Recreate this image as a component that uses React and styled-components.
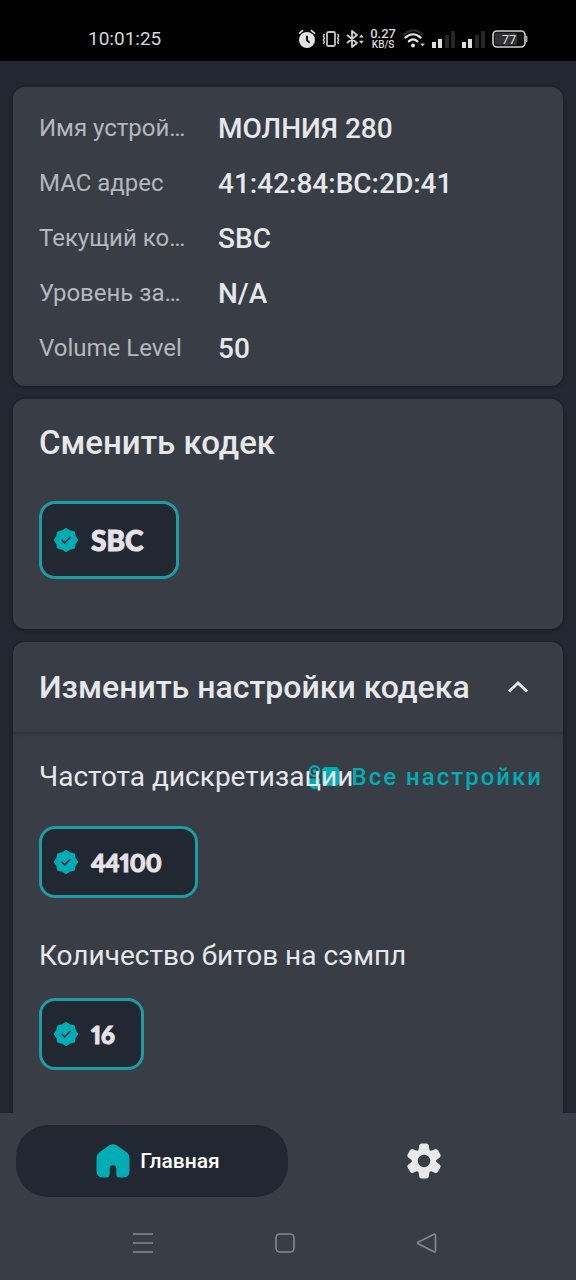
import React from "react";
import styled, { createGlobalStyle } from "styled-components";

const color = {
  bg: "#222831",
  card: "#393e46",
  teal: "#00adb5",
  text: "#e6e8ec",
  muted: "#b4b7bd",
  system: "#85898f",
};

const Global = createGlobalStyle`
  * { box-sizing: border-box; }
  body { margin: 0; background: ${color.bg}; font-family: Roboto, "Noto Sans", sans-serif; color: ${color.text}; }
  button { font: inherit; color: inherit; border: 0; background: none; padding: 0; cursor: pointer; }
  h2, h3, dl, dd, p { margin: 0; }
  svg { display: block; flex: none; }
`;

const Page = styled.div`
  min-height: 100vh;
  display: flex;
  flex-direction: column;
`;

const StatusBar = styled.header`
  display: flex;
  align-items: center;
  justify-content: space-between;
  height: 61px;
  padding: 16px 48px 0 88px;
  background: #000;
  color: #d6d6d6;
`;

const Clock = styled.time`
  font-size: 19px;
  line-height: 24px;
`;

const StatusIcons = styled.div`
  display: flex;
  align-items: center;
  gap: 6px;
`;

const Speed = styled.div`
  display: flex;
  flex-direction: column;
  align-items: center;
  font-weight: 500;
`;

const SpeedValue = styled.span`
  font-size: 13px;
  line-height: 13px;
`;

const SpeedUnit = styled.span`
  font-size: 10px;
  line-height: 10px;
`;

const Main = styled.main`
  flex: 1;
  display: flex;
  flex-direction: column;
  gap: 13px;
  padding: 26px 13px 0;
`;

const Card = styled.section`
  background: ${color.card};
  border-radius: ${(p) => (p.$open ? "12px 12px 0 0" : "12px")};
  box-shadow: 0 1px 4px rgba(0, 0, 0, 0.35);
  flex: ${(p) => (p.$open ? "1" : "none")};
`;

const InfoList = styled.dl`
  display: flex;
  flex-direction: column;
  gap: 15px;
  padding: 22px 26px 17px;
`;

const InfoRow = styled.div`
  display: grid;
  grid-template-columns: 152px 1fr;
  column-gap: 27px;
  line-height: 40px;
`;

const InfoLabel = styled.dt`
  font-size: 24px;
  color: ${color.muted};
  white-space: nowrap;
  line-height: 38px;
`;

const InfoValue = styled.dd`
  font-size: 28px;
  font-weight: 500;
`;

const CodecBody = styled.div`
  display: flex;
  flex-direction: column;
  align-items: flex-start;
  gap: 38px;
  padding: 24px 26px 50px;
`;

const Heading = styled.h2`
  font-size: ${(p) => (p.$large ? 33 : 32)}px;
  line-height: 40px;
  font-weight: 500;
  white-space: nowrap;
`;

const PanelToggle = styled.button`
  display: flex;
  width: 100%;
  align-items: center;
  justify-content: space-between;
  height: 90px;
  padding: 0 34px 0 26px;
  text-align: left;
`;

const PanelBody = styled.div`
  display: flex;
  flex-direction: column;
  gap: 41px;
  padding: 28px 20px 43px 26px;
  box-shadow: inset 0 3px 4px -1px rgba(0, 0, 0, 0.18);
`;

const Setting = styled.div`
  display: flex;
  flex-direction: column;
  align-items: flex-start;
  gap: ${(p) => p.$gap}px;
`;

const SettingHead = styled.div`
  display: grid;
  align-items: center;
  width: 100%;
`;

const SettingTitle = styled.h3`
  grid-area: 1 / 1;
  justify-self: start;
  z-index: 1;
  font-size: 28px;
  line-height: 34px;
  font-weight: 400;
  white-space: nowrap;
`;

const AllSettings = styled.button`
  grid-area: 1 / 1;
  justify-self: end;
  display: flex;
  align-items: center;
  gap: 12px;
  font-size: 24px;
  line-height: 34px;
  font-weight: 500;
  letter-spacing: 2px;
  white-space: nowrap;
  && { color: ${color.teal}; font-size: 24px; }
`;

const Chip = styled.button`
  && {
    display: inline-flex;
    align-items: center;
    gap: 13px;
    height: ${(p) => (p.$large ? 78 : 72)}px;
    padding: 0 ${(p) => (p.$narrow ? 26 : 33)}px 0 12px;
    border: 3px solid #1c9da5;
    border-radius: 16px;
    background: ${color.bg};
    color: #e6e2ea;
    font-family: Lato, "Open Sans", sans-serif;
    font-size: ${(p) => (p.$large ? 28 : 24)}px;
    font-weight: 900;
    font-variant-numeric: proportional-nums;
    -webkit-text-stroke: 1px currentColor;
  }
`;

const BottomNav = styled.nav`
  display: grid;
  grid-template-columns: 1fr 1fr;
  height: 96px;
  padding: 12px 16px;
  background: ${color.card};
`;

const NavItem = styled.button`
  && {
    display: flex;
    align-items: center;
    justify-content: center;
    gap: 10px;
    padding-left: ${(p) => (p.$active ? 12 : 0)}px;
    border-radius: 32px;
    background: ${(p) => (p.$active ? color.bg : "transparent")};
    color: ${(p) => (p.$active ? "#fff" : "#e8e9ea")};
    font-size: 21px;
    font-weight: 500;
  }
`;

const SystemNav = styled.nav`
  display: flex;
  justify-content: center;
  align-items: center;
  gap: 120px;
  height: 71px;
  padding: 0 6px 3px 0;
  background: ${color.card};
`;

const SystemButton = styled.button`
  width: 22px;
  height: 22px;
`;

function sealPath(cx, cy, outer, inner, points) {
  const pts = [];
  for (let i = 0; i < points * 2; i++) {
    const r = i % 2 ? inner : outer;
    const a = (Math.PI * i) / points - Math.PI / 2;
    pts.push((cx + r * Math.cos(a)).toFixed(2) + " " + (cy + r * Math.sin(a)).toFixed(2));
  }
  return "M" + pts.join("L") + "Z";
}

const Seal = () => (
  <svg width="24" height="24" viewBox="0 0 24 24">
    <path d={sealPath(12, 12, 10.8, 9.2, 8)} fill={color.teal} stroke={color.teal} strokeWidth="2.400" strokeLinejoin="round" />
    <path d="M8 12.300l2.600 2.600 5.400-5.400" fill="none" stroke={color.bg} strokeWidth="1.600" strokeLinecap="round" strokeLinejoin="round" />
  </svg>
);

const AlarmIcon = () => (
  <svg width="18" height="20" viewBox="0 0 18 20" fill="none" stroke="#e2e2e2" strokeLinecap="round">
    <circle cx="9" cy="11" r="8" fill="#e2e2e2" stroke="none" />
    <path d="M1.500 4.200L4.600 1.600M16.500 4.200L13.400 1.600" strokeWidth="1.600" />
    <path d="M9 7.400V11.400L11 13.200" stroke="#000" strokeWidth="1.800" />
  </svg>
);

const VibrateIcon = () => (
  <svg width="18" height="16" viewBox="0 0 18 16" fill="none" stroke="#c4c4c4" strokeWidth="1.800">
    <rect x="5" y="1" width="8" height="14" rx="1.500" />
    <path d="M2.400 3l-1 2 1 2-1 2 1 2-1 2M15.600 3l1 2-1 2 1 2-1 2 1 2" strokeWidth="1.600" />
  </svg>
);

const BluetoothIcon = () => (
  <svg width="18" height="18" viewBox="0 0 18 18" fill="none" stroke="#d2d2d2" strokeWidth="1.800" strokeLinejoin="round">
    <path d="M1 5l10 8-5 4V1l5 4-10 8" />
    <path d="M13 7.400l2.400-3 2.400 3zM13 10.800l2.400 3 2.400-3z" fill="#d2d2d2" stroke="none" />
  </svg>
);

const WifiIcon = () => (
  <svg width="24" height="19" viewBox="0 0 24 19" fill="none" strokeLinecap="round">
    <path d="M2 5.600C7.600 0 15.400 0 20.400 5.600" stroke="#2b2b2b" strokeWidth="2.400" />
    <path d="M3.400 8.600c4.800-4.400 10.600-4.400 15.200 0M6.800 12.400c2.800-2.600 5.800-2.600 8.600 0" stroke="#e4e4e4" strokeWidth="2.200" />
    <circle cx="11" cy="16.400" r="2" fill="#e4e4e4" />
    <path d="M18 14.400h5l-2.500 3z" fill="#bbb" />
  </svg>
);

const SignalIcon = () => (
  <svg width="24" height="18" viewBox="0 0 24 18">
    <path d="M0 12h4v6H0zM6 9h4v9H6z" fill="#dedede" />
    <path d="M13 5h4v13h-4zM19 1h4v17h-4z" fill="#262626" />
  </svg>
);

const BatteryIcon = () => (
  <svg width="36" height="18" viewBox="0 0 36 18">
    <rect x="1" y="1" width="32" height="16" rx="4" fill="#111" stroke="#cfcfcf" strokeWidth="1.600" />
    <rect x="3" y="3" width="22" height="12" rx="2" fill="#333" />
    <path d="M34.600 6v6" stroke="#aaa" strokeWidth="1.600" />
    <text x="17" y="14" textAnchor="middle" fontSize="13" fill="#dcdcdc" fontFamily="Roboto, sans-serif">77</text>
  </svg>
);

const ChevronUp = () => (
  <svg width="22" height="14" viewBox="0 0 22 14" fill="none" stroke={color.text} strokeWidth="3">
    <path d="M2 11.500l9-8.500 9 8.500" />
  </svg>
);

const AllSettingsIcon = () => (
  <svg width="32" height="24" viewBox="0 0 32 24">
    <circle cx="6.500" cy="6" r="4.800" fill="none" stroke={color.teal} strokeWidth="2.200" />
    <circle cx="6.500" cy="6" r="2" fill={color.teal} />
    <path d="M1 13.500h11v5a5.500 5.500 0 0 1-11 0z" fill={color.teal} />
    <rect x="14" y="2" width="17" height="19" rx="4" fill={color.teal} />
  </svg>
);

const HomeIcon = () => (
  <svg width="34" height="34" viewBox="0 0 34 34">
    <path
      fill={color.teal}
      d="M13 1.600Q17-1 21 1.600L30.600 8.200Q33.500 10.500 33.500 14V27Q33.500 33.500 27 33.500H24Q20.300 33.500 20.300 30V24.500Q20.300 21.200 17 21.200T13.700 24.500V30Q13.700 33.500 10 33.500H7Q.5 33.500 .5 27V14Q.5 10.500 3.400 8.200Z"
    />
  </svg>
);

const GearIcon = () => (
  <svg width="36" height="36" viewBox="-18 -18 36 36">
    <g fill="#e8e9ea">
      <circle r="12" />
      {[0, 60, 120, 180, 240, 300].map((a) => (
        <path key={a} transform={`rotate(${a})`} d="M-6.500-9.500Q-5-11-5-14Q-5-17.500-2-17.500H2Q5-17.500 5-14Q5-11 6.500-9.500Z" />
      ))}
    </g>
    <circle r="6.200" fill={color.card} />
  </svg>
);

const info = [
  ["Имя устрой…", "МОЛНИЯ 280"],
  ["MAC адрес", "41:42:84:BC:2D:41"],
  ["Текущий ко…", "SBC"],
  ["Уровень за…", "N/A"],
  ["Volume Level", "50"],
];

export default function App() {
  return (
    <Page>
      <Global />
      <StatusBar>
        <Clock>10:01:25</Clock>
        <StatusIcons>
          <AlarmIcon />
          <VibrateIcon />
          <BluetoothIcon />
          <Speed>
            <SpeedValue>0.27</SpeedValue>
            <SpeedUnit>KB/S</SpeedUnit>
          </Speed>
          <WifiIcon />
          <SignalIcon />
          <SignalIcon />
          <BatteryIcon />
        </StatusIcons>
      </StatusBar>
      <Main>
        <Card>
          <InfoList>
            {info.map(([label, value]) => (
              <InfoRow key={label}>
                <InfoLabel>{label}</InfoLabel>
                <InfoValue>{value}</InfoValue>
              </InfoRow>
            ))}
          </InfoList>
        </Card>
        <Card>
          <CodecBody>
            <Heading $large>Сменить кодек</Heading>
            <Chip $large type="button"><Seal />SBC</Chip>
          </CodecBody>
        </Card>
        <Card $open>
          <PanelToggle type="button" aria-expanded="true">
            <Heading as="span">Изменить настройки кодека</Heading>
            <ChevronUp />
          </PanelToggle>
          <PanelBody>
            <Setting $gap={32}>
              <SettingHead>
                <SettingTitle>Частота дискретизации</SettingTitle>
                <AllSettings type="button"><AllSettingsIcon />Все настройки</AllSettings>
              </SettingHead>
              <Chip type="button"><Seal />44100</Chip>
            </Setting>
            <Setting $gap={25}>
              <SettingTitle>Количество битов на сэмпл</SettingTitle>
              <Chip $narrow type="button"><Seal />16</Chip>
            </Setting>
          </PanelBody>
        </Card>
      </Main>
      <BottomNav>
        <NavItem $active type="button"><HomeIcon />Главная</NavItem>
        <NavItem type="button" aria-label="Настройки"><GearIcon /></NavItem>
      </BottomNav>
      <SystemNav>
        <SystemButton type="button" aria-label="Меню">
          <svg width="22" height="22" viewBox="0 0 22 22" stroke={color.system} strokeWidth="1.600">
            <path d="M1 2h20M1 11h20M1 20h20" />
          </svg>
        </SystemButton>
        <SystemButton type="button" aria-label="Домой">
          <svg width="22" height="22" viewBox="0 0 22 22" fill="none" stroke={color.system} strokeWidth="1.600">
            <rect x="2" y="2" width="18" height="18" rx="4" />
          </svg>
        </SystemButton>
        <SystemButton type="button" aria-label="Назад">
          <svg width="22" height="22" viewBox="0 0 22 22" fill="none" stroke={color.system} strokeWidth="1.600" strokeLinejoin="round">
            <path d="M2.500 10L18 2.200Q19.500 1.800 19.500 3.400V18.600Q19.500 20.200 18 19.800L2.500 12Q1 11 2.500 10Z" />
          </svg>
        </SystemButton>
      </SystemNav>
    </Page>
  );
}
